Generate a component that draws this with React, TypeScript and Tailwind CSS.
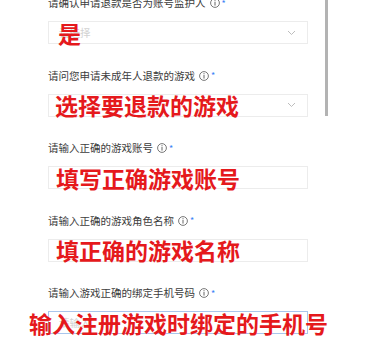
import React from "react";

const font = { fontFamily: '"Noto Sans CJK SC", "Noto Sans", sans-serif' };

function Info() {
  return (
    <svg width="10" height="10" viewBox="0 0 10 10" className="ml-[4px] shrink-0">
      <circle cx="5" cy="5" r="4.4" fill="none" stroke="#555" strokeWidth="0.8" />
      <rect x="4.55" y="2.2" width="0.9" height="0.9" fill="#555" />
      <rect x="4.55" y="3.8" width="0.9" height="3.8" fill="#555" />
    </svg>
  );
}

function Chevron() {
  return (
    <svg width="9" height="6" viewBox="0 0 9 6" className="shrink-0">
      <path d="M1 1 L4.5 4.5 L8 1" fill="none" stroke="#b5b5b5" strokeWidth="0.9" />
    </svg>
  );
}

type FieldProps = {
  label: string;
  select?: boolean;
  placeholder?: string;
  note: string;
  noteLeft: string;
  focused?: boolean;
  first?: boolean;
};

function Field({ label, select, placeholder, note, noteLeft, focused, first }: FieldProps) {
  return (
    <div className={first ? "mt-[-4px] flex flex-col" : "flex flex-col"}>
      <div className="flex h-[14px] items-center text-[10.5px] leading-[14px] text-[#3c3c3c]">
        <span>{label}</span>
        <Info />
        <span className="ml-[2px] text-[9px] leading-none text-[#3b82f6]">*</span>
      </div>
      <div
        className={
          "relative mt-[11px] flex h-[23px] w-[260px] items-center justify-between border bg-white pl-[10px] pr-[11px] " +
          (focused ? "border-[#a9c6ec]" : "border-[#ececec]")
        }
      >
        <span className="text-[10.5px] text-[#d2d2d2]">{placeholder}</span>
        {select ? <Chevron /> : null}
        <span
          className="absolute top-1/2 -translate-y-1/2 whitespace-nowrap text-[23px] font-bold leading-none text-[#e5191c]"
          style={{ left: noteLeft }}
        >
          {note}
        </span>
      </div>
    </div>
  );
}

export default function App() {
  return (
    <div className="relative h-[343px] w-[370px] overflow-hidden bg-white" style={font}>
      <div className="flex flex-col gap-[24.5px] pl-[48px]">
        <Field first label="请确认申请退款是否为账号监护人" select placeholder="请选择" note="是" noteLeft="9px" />
        <Field label="请问您申请未成年人退款的游戏" select note="选择要退款的游戏" noteLeft="6px" />
        <Field label="请输入正确的游戏账号" note="填写正确游戏账号" noteLeft="7px" />
        <Field label="请输入正确的游戏角色名称" note="填正确的游戏名称" noteLeft="7px" />
        <Field label="请输入游戏正确的绑定手机号码" placeholder="请输入" note="输入注册游戏时绑定的手机号" noteLeft="-20px" focused />
      </div>
      <div className="absolute left-[325px] top-0 h-[116px] w-[3px] bg-[#b3b3b3]" />
    </div>
  );
}
